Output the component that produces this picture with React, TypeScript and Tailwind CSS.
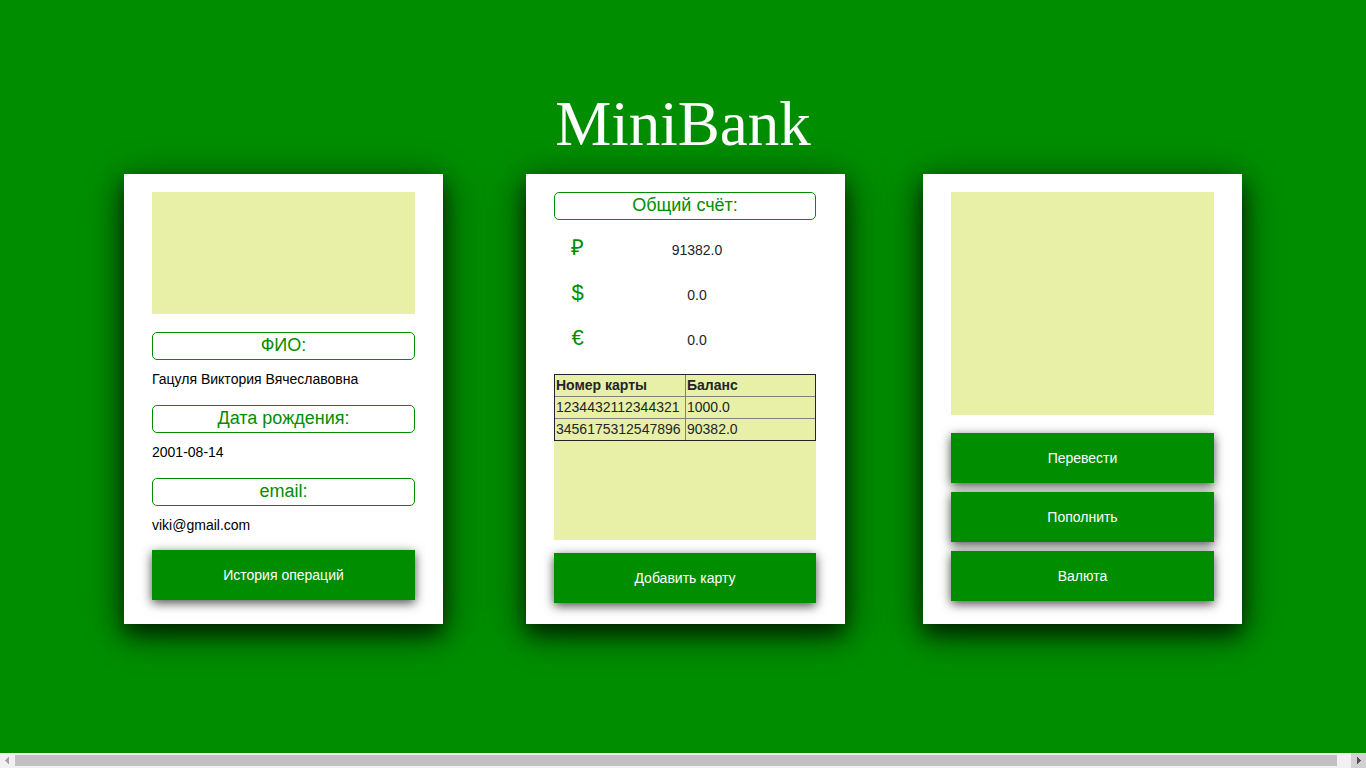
import type { ReactNode } from "react";

const profile = [
  { label: "ФИО:", value: "Гацуля Виктория Вячеславовна" },
  { label: "Дата рождения:", value: "2001-08-14" },
  { label: "email:", value: "viki@gmail.com" },
];

const totals = [
  { symbol: "₽", amount: "91382.0" },
  { symbol: "$", amount: "0.0" },
  { symbol: "€", amount: "0.0" },
];

const cards = [
  { number: "1234432112344321", balance: "1000.0" },
  { number: "3456175312547896", balance: "90382.0" },
];

function Card({ children }: { children: ReactNode }) {
  return (
    <section className="flex min-h-[450px] w-[319px] flex-col bg-white px-7 pt-[18px] pb-5 shadow-[0_10px_20px_rgba(0,0,0,0.6),0_8px_40px_rgba(0,0,0,0.5)]">
      {children}
    </section>
  );
}

function Heading({ children }: { children: ReactNode }) {
  return (
    <h2 className="min-h-7 rounded-[5px] border border-[#008e00] pb-0.5 text-center text-lg leading-6 text-[#008e00]">
      {children}
    </h2>
  );
}

function ActionButton({ children }: { children: ReactNode }) {
  return (
    <button
      type="button"
      className="h-[50px] w-full shrink-0 cursor-pointer bg-[#008e00] text-sm text-white shadow-[0_3px_10px_rgba(0,0,0,0.7)]"
    >
      {children}
    </button>
  );
}

function ScrollBar() {
  return (
    <div className="flex h-[15px] items-center bg-[#f1f1f1]" aria-hidden="true">
      <svg className="h-[15px] w-[15px]" viewBox="0 0 15 15" shapeRendering="crispEdges">
        <path d="M9 4v7L5 7.5z" fill="#a3a3a3" />
      </svg>
      <div className="mr-[14px] h-[11px] flex-1 bg-[#c1c1c1]" />
      <svg className="h-[15px] w-[15px] bg-[#d2d2d2]" viewBox="0 0 15 15" shapeRendering="crispEdges">
        <path d="M6 4v7l4-3.5z" fill="#505050" />
      </svg>
    </div>
  );
}

export default function App() {
  return (
    <div className="flex min-h-screen flex-col bg-[#008e00] font-['Liberation_Sans',Arial,sans-serif]">
      <main className="flex-1 pt-22">
        <h1 className="mb-[14px] text-center font-['Liberation_Serif','Times_New_Roman',serif] text-[63px] leading-[72px] text-white">
          MiniBank
        </h1>
        <div className="flex justify-center gap-[78px]">
          <Card>
            <div className="mb-[18px] h-[122px] bg-[#e8f0a7]" />
            <div className="mb-1.5 flex flex-col gap-[7px]">
              {profile.map((item) => (
                <div key={item.label}>
                  <Heading>{item.label}</Heading>
                  <p className="text-sm leading-[38px] text-black">{item.value}</p>
                </div>
              ))}
            </div>
            <ActionButton>История операций</ActionButton>
          </Card>

          <div className="flex pl-[5px]">
            <Card>
              <div className="pr-px">
                <Heading>Общий счёт:</Heading>
                <dl className="mt-px mb-[18px]">
                  {totals.map((total) => (
                    <div key={total.symbol} className="flex h-[45px] items-baseline pt-3 pr-[23px]">
                      <dt className="w-[47px] text-center text-[22px] leading-[30px] text-[#008e00]">{total.symbol}</dt>
                      <dd className="flex-1 text-center text-sm text-[#212529]">{total.amount}</dd>
                    </div>
                  ))}
                </dl>
                <div className="mb-[13px] h-[166px] bg-[#e8f0a7]">
                  <table className="w-full table-fixed border-separate border-spacing-0 border border-[#212529] text-left text-sm leading-5 text-[#212529]">
                    <thead>
                      <tr>
                        <th className="h-[22px] w-[131px] border-r border-b border-[#808080] px-px py-0 align-top">
                          Номер карты
                        </th>
                        <th className="h-[22px] border-b border-[#808080] px-px py-0 align-top">Баланс</th>
                      </tr>
                    </thead>
                    <tbody>
                      {cards.map((card) => (
                        <tr key={card.number} className="group">
                          <td className="h-[22px] border-r border-b border-[#808080] px-px py-0 align-top group-last:h-[21px] group-last:border-b-0">
                            {card.number}
                          </td>
                          <td className="h-[22px] border-b border-[#808080] px-px py-0 align-top group-last:h-[21px] group-last:border-b-0">
                            {card.balance}
                          </td>
                        </tr>
                      ))}
                    </tbody>
                  </table>
                </div>
                <ActionButton>Добавить карту</ActionButton>
              </div>
            </Card>
          </div>

          <Card>
            <div className="mb-[18px] h-[223px] bg-[#e8f0a7]" />
            <div className="flex flex-col gap-[9px]">
              <ActionButton>Перевести</ActionButton>
              <ActionButton>Пополнить</ActionButton>
              <ActionButton>Валюта</ActionButton>
            </div>
          </Card>
        </div>
      </main>
      <ScrollBar />
    </div>
  );
}
